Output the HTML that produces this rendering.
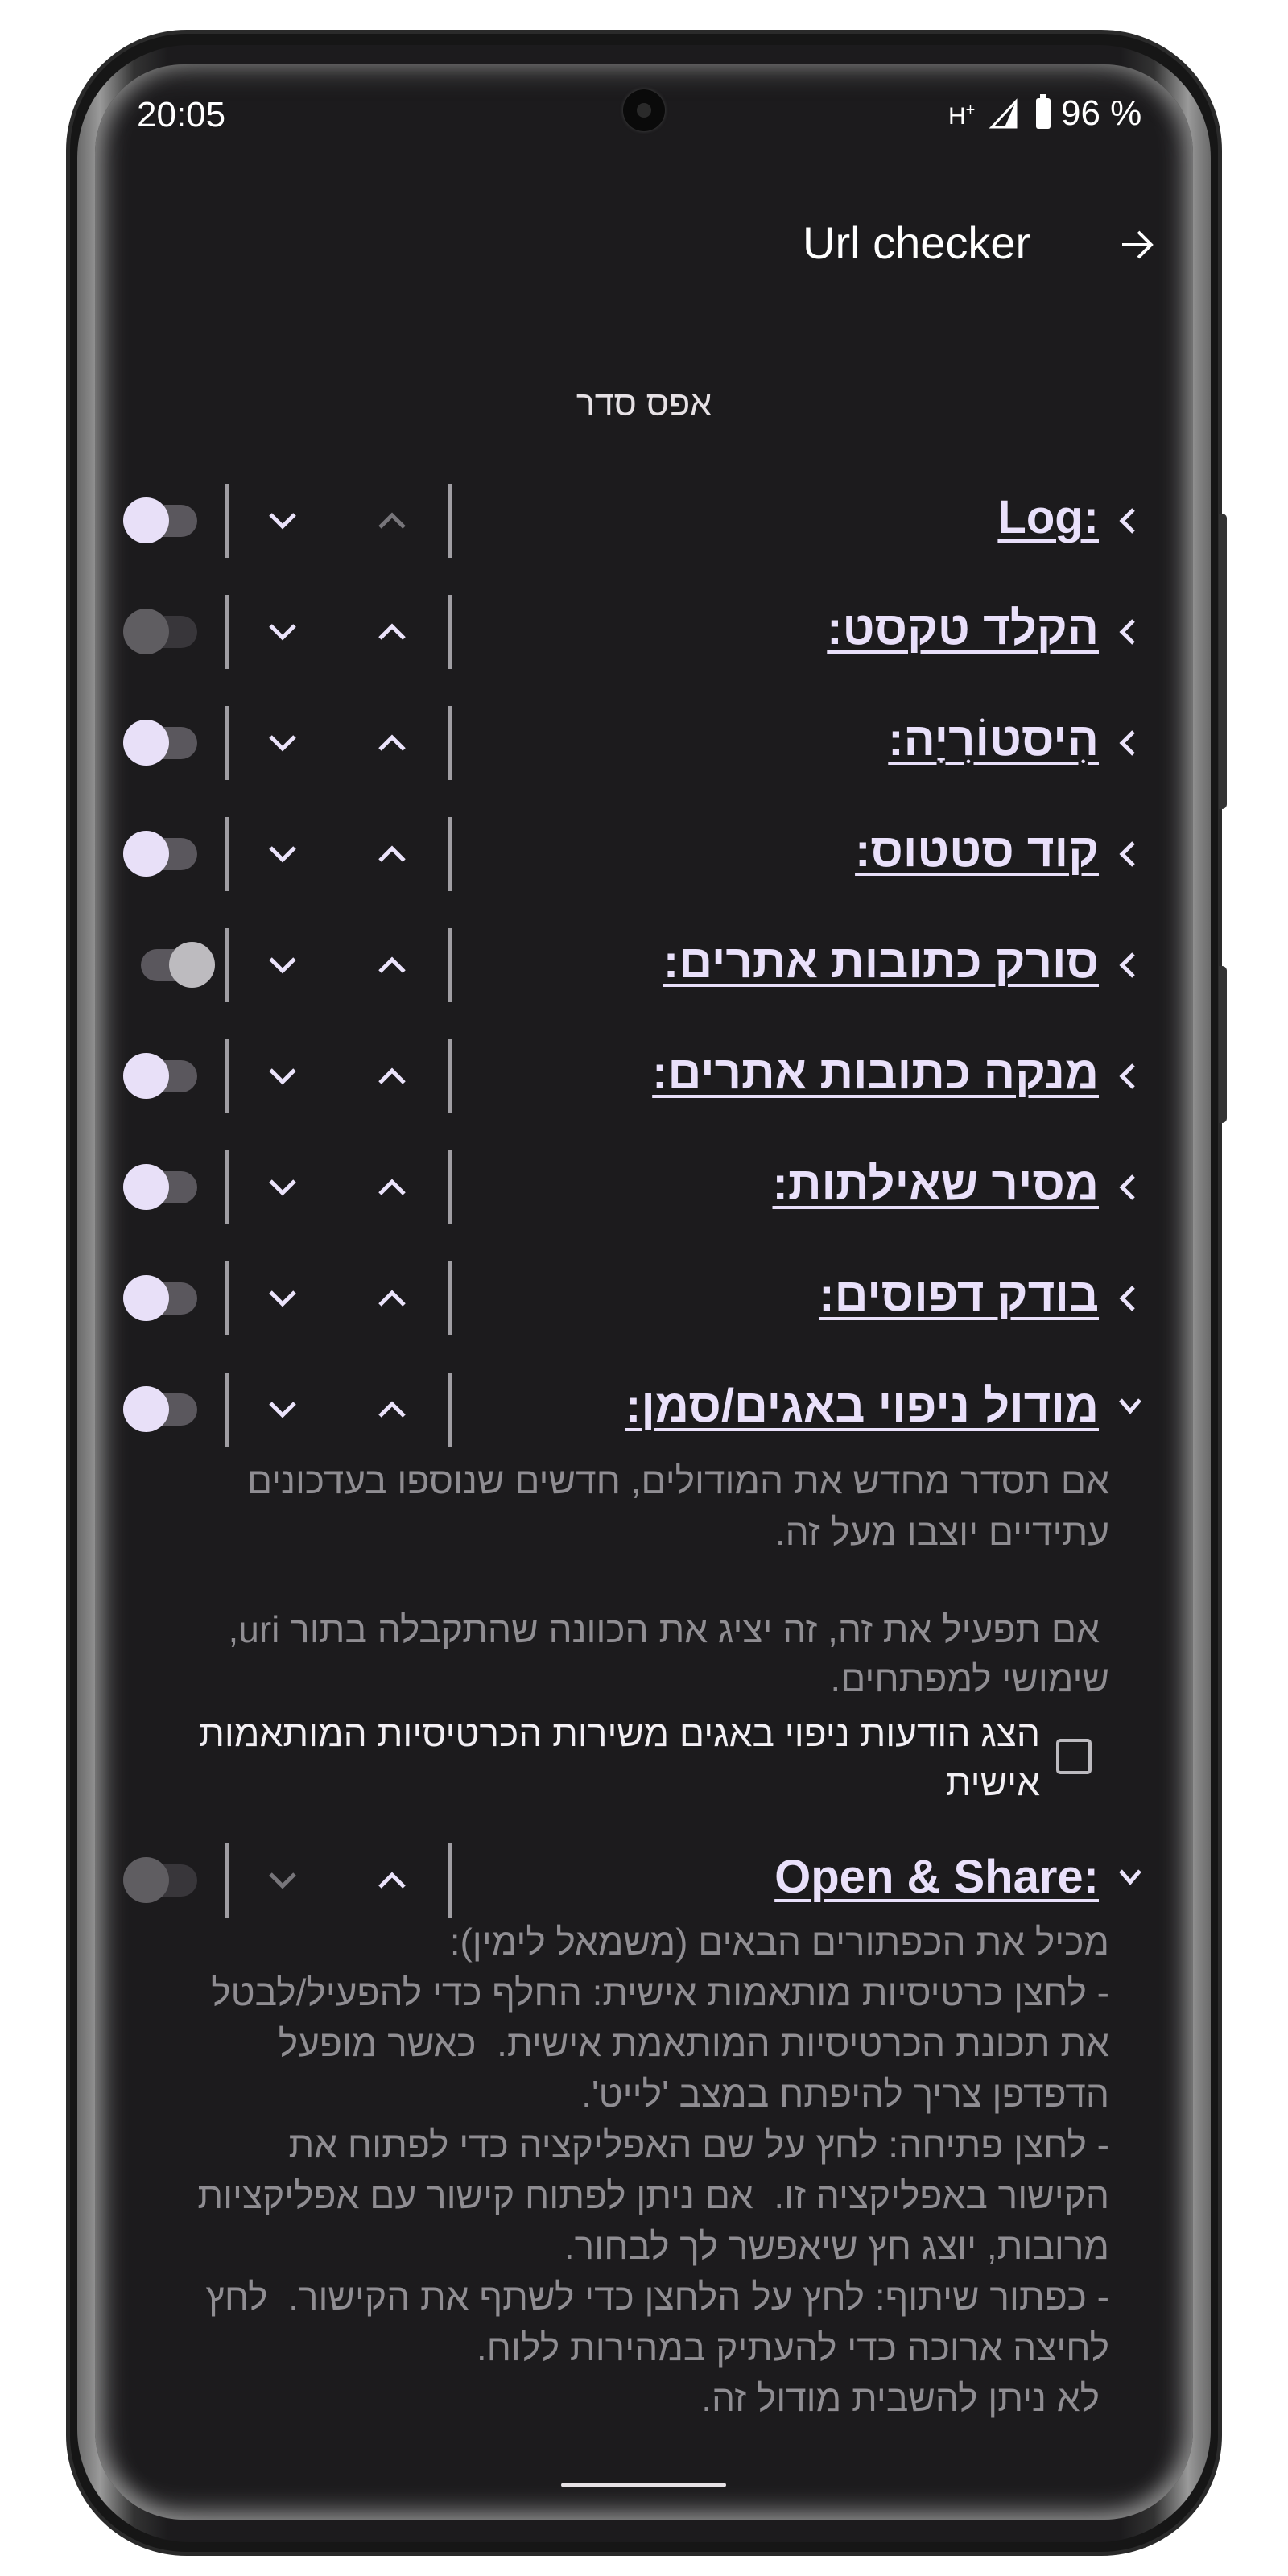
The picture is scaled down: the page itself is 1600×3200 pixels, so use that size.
<!DOCTYPE html>
<html><head><meta charset="utf-8"><style>
*{margin:0;padding:0;box-sizing:border-box}
body{width:1600px;height:3200px;background:#fff;position:relative;overflow:hidden;font-family:"Liberation Sans","DejaVu Sans",sans-serif}
.phone{position:absolute;left:82px;top:37px;width:1436px;height:3138px;border-radius:150px;background:#161616;border:5px solid #2a2a2a}
.bezel{position:absolute;left:96px;top:56px;width:1408px;height:3102px;border-radius:140px;background:linear-gradient(90deg,#6a6a6a,#9a9a9a 2%,#333 5%,#1c1b1d 8%,#1c1b1d 92%,#333 95%,#9a9a9a 98%,#6a6a6a)}
.screen{position:absolute;left:118px;top:80px;width:1364px;height:3050px;border-radius:110px;background:#1c1b1d;box-shadow:inset 24px 0 30px -14px #8a8a8a,inset -24px 0 30px -14px #8a8a8a,inset 0 24px 30px -14px #555,inset 0 -24px 30px -14px #888}
.btn{position:absolute;left:1514px;width:10px;background:#333;border-radius:0 6px 6px 0}
.a{position:absolute;white-space:nowrap}
.t{position:absolute;right:235px;color:#e9e0fa;font-weight:bold;font-size:58px;text-decoration:underline;text-decoration-thickness:4px;text-underline-offset:8px;direction:rtl;line-height:1}
.tg{position:absolute;left:153px;width:92px;height:40px;border-radius:20px;background:#5a575d}
.th{position:absolute;width:57px;height:57px;border-radius:50%;top:-9px;left:0;background:#e8e0f8}
.dv{position:absolute;width:6px;height:92px;background:#a09ea3}
.d{position:absolute;color:#8f8d92;font-size:46px;direction:rtl;right:222px;white-space:nowrap;line-height:1}
svg{position:absolute;overflow:visible}
</style></head><body>
<div class="phone"></div>
<div class="bezel"></div>
<div class="screen"></div>
<div class="btn" style="top:638px;height:367px"></div>
<div class="btn" style="top:1200px;height:195px"></div>
<div class="a" style="left:774px;top:111px;width:52px;height:52px;border-radius:50%;background:#0a0a0a;box-shadow:0 0 4px #444"></div>
<div class="a" style="left:791px;top:128px;width:18px;height:18px;border-radius:50%;background:#2a2a2a"></div>
<div class="a" style="left:170px;top:118px;color:#fff;font-size:44px">20:05</div>
<div class="a" style="left:1178px;top:126px;color:#fff;font-size:30px">H<sup style="font-size:20px">+</sup></div>
<svg style="left:1230px;top:124px" width="34" height="36"><polygon points="32,2 32,34 2,34" fill="none" stroke="#fff" stroke-width="3"/><polygon points="32,2 32,34 18,34" fill="#fff"/></svg>
<div class="a" style="left:1287px;top:122px;width:18px;height:38px;background:#fff;border-radius:3px"></div>
<div class="a" style="left:1292px;top:117px;width:8px;height:6px;background:#fff"></div>
<div class="a" style="left:1318px;top:116px;color:#fff;font-size:44px">96 %</div>
<div class="a" style="left:997px;top:269px;color:#fff;font-size:56px">Url checker</div>
<svg style="left:1390px;top:282px" width="44" height="44"><path d="M4 22H40M24 6L40 22L24 38" fill="none" stroke="#fff" stroke-width="4"/></svg>
<div class="a" style="left:0;width:1600px;text-align:center;top:478px;color:#e6e1e5;font-size:43px;direction:rtl">אפס סדר</div>

<div id="rows"></div>
<script>
var rows=[["Log:",647,"on",0,1,1],["הקלד טקסט:",785,"off",0,0],["הִיסטוֹרִיָה:",923,"on",0,0],["קוד סטטוס:",1061,"on",0,0],["סורק כתובות אתרים:",1199,"right",0,0],["מנקה כתובות אתרים:",1337,"on",0,0],["מסיר שאילתות:",1475,"on",0,0],["בודק דפוסים:",1613,"on",0,0],["מודול ניפוי באגים/סמן:",1751,"on",2,0],["Open &amp; Share:",2336,"off",3,0,1]];
var h="";
rows.forEach(function(r){var y=r[1];
var thumb=r[2]=="on"?'<div class="th"></div>':r[2]=="off"?'<div class="th" style="background:#5f5d61"></div>':'<div class="th" style="left:35px;background:#bdbbbf"></div>';
var track=r[2]=="off"?'background:#38363a':'background:#5a575d';
h+='<div class="tg" style="top:'+(y-20)+'px;'+(r[2]=="right"?'left:175px;width:70px;':'')+track+'">'+thumb+'</div>';
h+='<div class="dv" style="left:279px;top:'+(y-46)+'px"></div><div class="dv" style="left:556px;top:'+(y-46)+'px"></div>';
var dc=r[3]==3?'#77757a':'#ebe3fb', uc=r[4]?'#77757a':'#ebe3fb';
h+='<svg style="left:334px;top:'+(y-10)+'px" width="34" height="20"><path d="M2 2L17 17L32 2" fill="none" stroke="'+dc+'" stroke-width="5"/></svg>';
h+='<svg style="left:470px;top:'+(y-10)+'px" width="34" height="20"><path d="M2 18L17 3L32 18" fill="none" stroke="'+uc+'" stroke-width="5"/></svg>';
var ch=r[3]>=2?'<path d="M2 4L14 18L26 4" fill="none" stroke="#ebe3fb" stroke-width="5"/>':'<path d="M18 2L4 16L18 30" fill="none" stroke="#ebe3fb" stroke-width="5"/>';
h+='<svg style="left:1390px;top:'+(y-16)+'px" width="28" height="32">'+ch+'</svg>';
h+='<div class="t" style="top:'+(y-33)+'px;'+(r[5]?'direction:ltr':'')+'">'+r[0]+'</div>';
});
document.getElementById("rows").innerHTML=h;
</script>

<div class="d" style="top:1816px">אם תסדר מחדש את המודולים, חדשים שנוספו בעדכונים</div>
<div class="d" style="top:1880px">עתידיים יוצבו מעל זה.</div>
<div class="d" style="top:2001px;right:234px">אם תפעיל את זה, זה יציג את הכוונה שהתקבלה בתור uri,</div>
<div class="d" style="top:2062px">שימושי למפתחים.</div>
<div class="a" style="left:1312px;top:2160px;width:44px;height:44px;border:4px solid #bcbabf;border-radius:5px"></div>
<div class="d" style="top:2130px;right:308px;color:#f2eff4">הצג הודעות ניפוי באגים משירות הכרטיסיות המותאמות</div>
<div class="d" style="top:2191px;right:308px;color:#f2eff4">אישית</div>

<div class="d" style="top:2389px">מכיל את הכפתורים הבאים (משמאל לימין):</div>
<div class="d" style="top:2452px">- לחצן כרטיסיות מותאמות אישית: החלף כדי להפעיל/לבטל</div>
<div class="d" style="top:2515px">את תכונת הכרטיסיות המותאמת אישית.&nbsp; כאשר מופעל</div>
<div class="d" style="top:2578px">הדפדפן צריך להיפתח במצב 'לייט'.</div>
<div class="d" style="top:2641px">- לחצן פתיחה: לחץ על שם האפליקציה כדי לפתוח את</div>
<div class="d" style="top:2704px">הקישור באפליקציה זו.&nbsp; אם ניתן לפתוח קישור עם אפליקציות</div>
<div class="d" style="top:2767px">מרובות, יוצג חץ שיאפשר לך לבחור.</div>
<div class="d" style="top:2830px">- כפתור שיתוף: לחץ על הלחצן כדי לשתף את הקישור.&nbsp; לחץ</div>
<div class="d" style="top:2893px">לחיצה ארוכה כדי להעתיק במהירות ללוח.</div>
<div class="d" style="top:2956px;right:234px">לא ניתן להשבית מודול זה.</div>

<div class="a" style="left:697px;top:3084px;width:205px;height:6px;border-radius:3px;background:#e6e1e5"></div>
</body></html>
